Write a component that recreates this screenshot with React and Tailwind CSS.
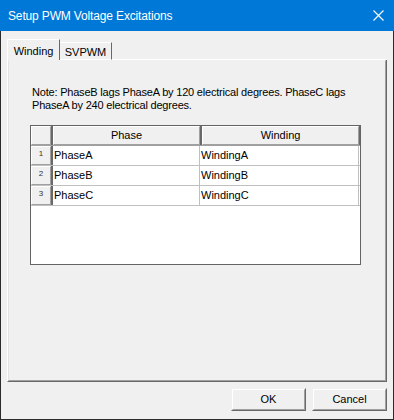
import React from 'react';

const rows = [
  { n: 1, phase: 'PhaseA', winding: 'WindingA' },
  { n: 2, phase: 'PhaseB', winding: 'WindingB' },
  { n: 3, phase: 'PhaseC', winding: 'WindingC' },
];

function Bevel({ className = '', children }) {
  // classic raised 3d look
  return (
    <div className={`border border-t-white border-l-white border-r-[#a0a0a0] border-b-[#a0a0a0] bg-[#f0f0f0] ${className}`}>
      {children}
    </div>
  );
}

function Button({ children }) {
  return (
    <button className="w-[75px] h-[23px] border border-t-[#f0f0f0] border-l-[#f0f0f0] border-r-[#696969] border-b-[#696969] bg-[#f0f0f0] p-0">
      <div className="h-full w-full border border-t-white border-l-white border-r-[#a0a0a0] border-b-[#a0a0a0] flex items-center justify-center text-[11px] text-black">
        {children}
      </div>
    </button>
  );
}

export default function App() {
  return (
    <div className="w-[394px] h-[420px] flex flex-col bg-[#f0f0f0] font-['Liberation_Sans',Arial,sans-serif] text-black overflow-hidden">
      {/* title bar */}
      <div className="h-[31px] shrink-0 bg-[#0078d7] flex items-center justify-between pl-[8px] pr-[9px]">
        <span className="text-white text-[12px] tracking-[-0.15px] font-['Liberation_Sans',Arial,sans-serif]">Setup PWM Voltage Excitations</span>
        <svg width="11" height="11" viewBox="0 0 11 11" className="mr-[1px]">
          <path d="M0.5 0.5 L10.5 10.5 M10.5 0.5 L0.5 10.5" stroke="white" strokeWidth="1.1" />
        </svg>
      </div>

      <div className="flex-1 flex flex-col border-x border-b border-[#2b2b2b]">
        <div className="px-[6px] pt-[8px] pr-[6px] flex flex-col">
          {/* tabs */}
          <div className="flex items-end h-[21px] -mb-px relative z-10">
            <div className="h-[21px] w-[53px] border border-b-0 border-t-white border-l-white border-r-[#696969] bg-[#f0f0f0] flex items-start justify-center pt-[3px] text-[11px]">
              Winding
            </div>
            <div className="h-[18px] w-[52px] border border-t-white border-l-0 border-r-[#696969] border-b-white bg-[#f0f0f0] flex items-start justify-center pt-[1px] text-[11px]">
              SVPWM
            </div>
            <div className="flex-1 h-px bg-white" />
          </div>

          {/* panel */}
          <div className="h-[323px] border border-t-white border-l-white border-r-[#696969] border-b-[#696969]">
            <div className="h-full border border-t-transparent border-l-[#e3e3e3] border-r-[#a0a0a0] border-b-[#a0a0a0] pl-[23px] pt-[25px]">
              <p className="text-[11px] leading-[13px] tracking-[-0.2px]">
                Note: PhaseB lags PhaseA by 120 electrical degrees. PhaseC lags
                <br />
                PhaseA by 240 electrical degrees.
              </p>

              {/* grid */}
              <div className="mt-[13px] -ml-[2px] w-[331px] h-[140px] border border-[#646464] bg-white flex flex-col">
                <div className="flex h-[20px] border-b border-[#a0a0a0]">
                  <Bevel className="w-[20px] h-[19px] shrink-0" />
                  <div className="w-[2px] bg-[#696969]" />
                  <Bevel className="w-[147px] h-[19px] flex items-center justify-center text-[11px]">Phase</Bevel>
                  <div className="w-[2px] bg-[#696969]" />
                  <Bevel className="flex-1 h-[19px] flex items-center justify-center text-[11px]">Winding</Bevel>
                  <div className="w-px bg-[#696969]" />
                </div>
                {rows.map((r) => (
                  <div key={r.n} className="flex h-[20px] border-b border-[#c0c0c0]">
                    <Bevel className="w-[20px] h-[19px] shrink-0 flex items-start justify-center pt-[1px] text-[8px] text-[#333]">{r.n}</Bevel>
                    <div className="w-[2px] bg-[#696969]" />
                    <div className="w-[147px] border-r border-[#c0c0c0] flex items-center pl-[1px] text-[11px]">{r.phase}</div>
                    <div className="flex-1 flex items-center pl-[1px] text-[11px] border-r border-[#c0c0c0]">{r.winding}</div>
                    <div className="w-px" />
                  </div>
                ))}
              </div>
            </div>
          </div>
        </div>

        {/* buttons */}
        <div className="flex justify-end gap-[6px] pr-[6px] mt-[6px]">
          <Button>OK</Button>
          <Button>Cancel</Button>
        </div>
      </div>
    </div>
  );
}
